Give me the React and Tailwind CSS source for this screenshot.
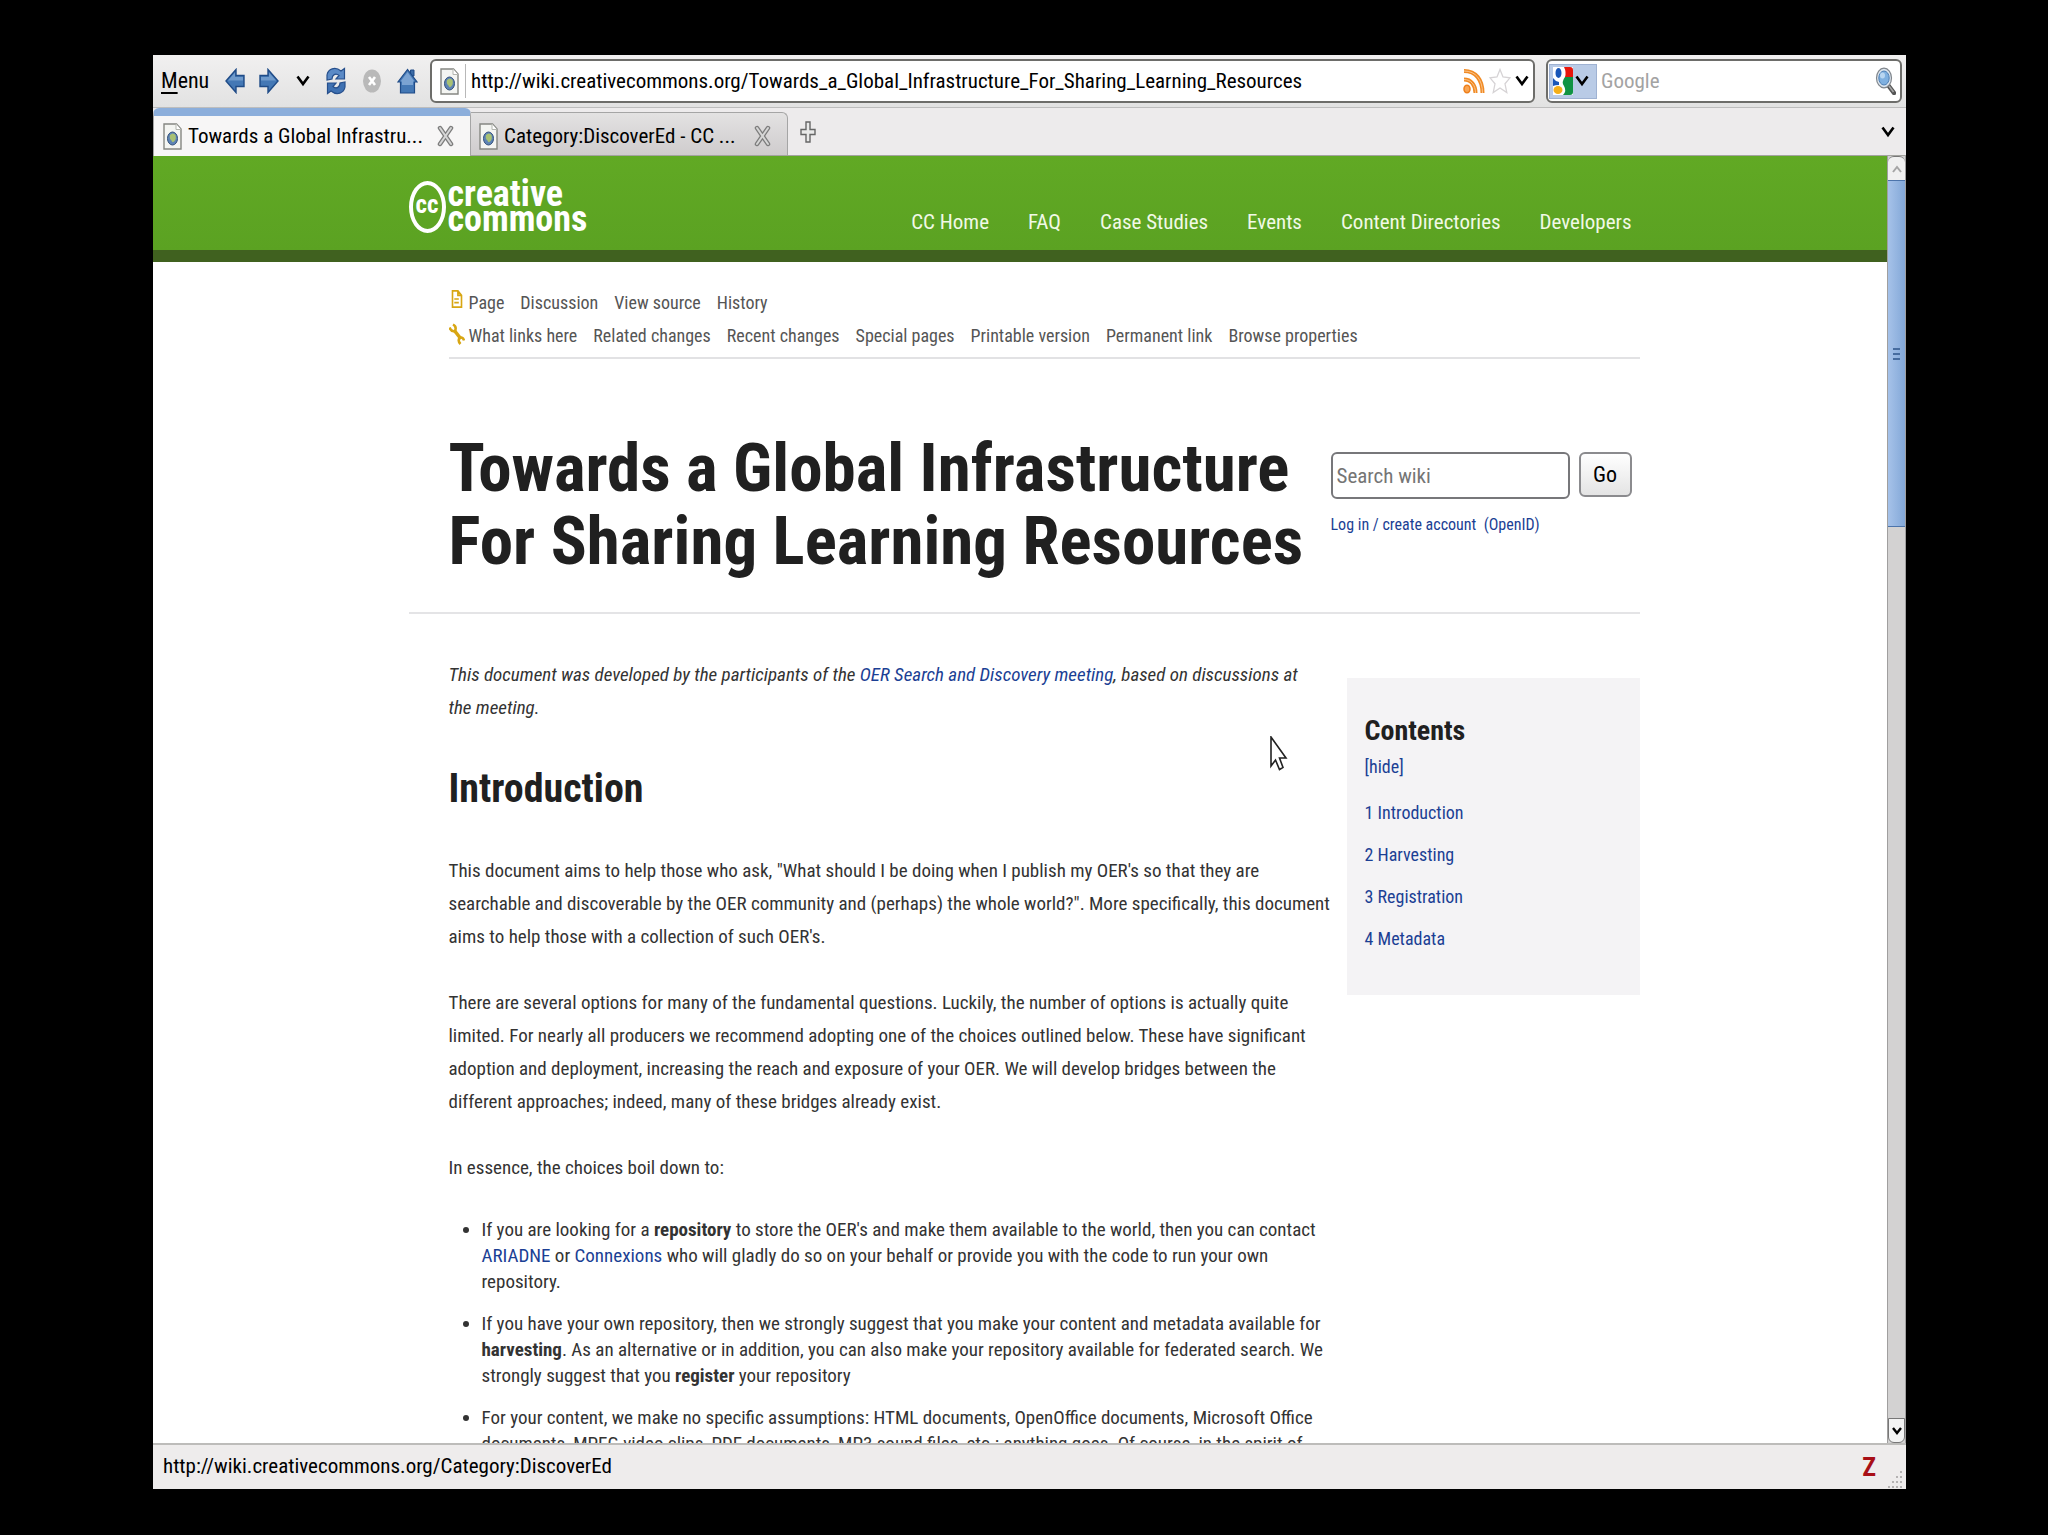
import React from "react";

const navLinks = ["CC Home", "FAQ", "Case Studies", "Events", "Content Directories", "Developers"];
const pageLinks = ["Page", "Discussion", "View source", "History"];
const toolLinks = [
  "What links here",
  "Related changes",
  "Recent changes",
  "Special pages",
  "Printable version",
  "Permanent link",
  "Browse properties",
];
const contents = ["Introduction", "Harvesting", "Registration", "Metadata"];

const Chevron = ({ className = "" }) => (
  <svg viewBox="0 0 14 12" className={`h-3 w-[14px] shrink-0 ${className}`} fill="none" aria-hidden="true">
    <path d="M1.500 1.500 7 9 12.500 1.500" stroke="currentColor" strokeWidth="2.600" />
  </svg>
);

const PageIcon = () => (
  <svg viewBox="0 0 19 27" className="h-[27px] w-[19px] shrink-0" aria-hidden="true">
    <path d="M1 1h12.500l4.500 5v20H1z" fill="#f4f5f2" stroke="#858782" strokeWidth="1.400" />
    <path d="M13 1v5.500h5" fill="#fff" stroke="#b4b6b0" />
    <ellipse cx="9.500" cy="15.500" rx="5" ry="6.500" fill="#5d83b5" stroke="#34517c" />
    <path d="M7 12q3-3 5.500 0q1 4-1 6q-2 2.500-3-.5q-2.500-2-1.500-5.500z" fill="#a8c173" />
  </svg>
);

const ArrowIcon = ({ flip }) => (
  <svg viewBox="0 0 20 26" className={`h-[26px] w-5 ${flip ? "-scale-x-100" : ""}`} aria-hidden="true">
    <path d="M1 13 11 1.500V7.500H19V18.500H11V24.500z" fill="#4478b5" stroke="#1f4b87" strokeWidth="1.400" />
    <path d="M3 12.500 10 4.500V9H18V12.500z" fill="#6f9acb" />
  </svg>
);

const ReloadIcon = () => (
  <svg viewBox="0 0 20 28" className="h-7 w-5" aria-hidden="true">
    <path d="M1 13V8C2 2 9-1 15 4L18.500 1.500V12H10L13 8.500C9.500 5.500 6 8 6 12z" fill="#5b8ac6" stroke="#264f8c" strokeWidth="1.200" />
    <path d="M19 15V20C18 26 11 29 5 24L1.500 26.500V16H10L7 19.500C10.500 22.500 14 20 14 16z" fill="#3f71b2" stroke="#264f8c" strokeWidth="1.200" />
  </svg>
);

const StopIcon = () => (
  <svg viewBox="0 0 18 24" className="h-6 w-[18px]" aria-hidden="true">
    <ellipse cx="9" cy="12" rx="9" ry="11.500" fill="#b9b9b9" />
    <path d="M6 8l6 8M12 8l-6 8" stroke="#fff" strokeWidth="2.600" />
  </svg>
);

const HomeIcon = () => (
  <svg viewBox="0 0 21 26" className="h-[26px] w-[21px]" aria-hidden="true">
    <path d="M13.500 2h3.500v6h-3.500z" fill="#3b6ba6" stroke="#1f4b87" />
    <path d="M10.500 1.500 1 14H3.500V25H17.500V14H20z" fill="#4478b5" stroke="#1f4b87" strokeWidth="1.200" />
    <path d="M10.500 4 3.500 13.500H5V17h11v-3.500h1.500z" fill="#7ba3d2" />
  </svg>
);

const CloseIcon = () => (
  <svg viewBox="0 0 17 22" className="h-[22px] w-[17px]" aria-hidden="true">
    <path d="M3 3l11 16M14 3L3 19" stroke="#7c7c7c" strokeWidth="4.500" strokeLinecap="round" />
    <path d="M3 3l11 16M14 3L3 19" stroke="#d6d6d6" strokeWidth="2" strokeLinecap="round" />
  </svg>
);

const RssIcon = () => (
  <svg viewBox="0 0 22 26" className="h-[26px] w-[22px]" fill="none" aria-hidden="true">
    <path d="M1 3C13 3 19.500 12 19.500 25M1 11.500C8 11.500 12.500 17 12.500 25" stroke="#f08a24" strokeWidth="4" />
    <path d="M1 3C13 3 19.500 12 19.500 25M1 11.500C8 11.500 12.500 17 12.500 25" stroke="#fbc48b" strokeWidth="1" />
    <ellipse cx="4" cy="21" rx="3" ry="3.800" fill="#f9a552" stroke="#ee7f1b" strokeWidth="1.500" />
  </svg>
);

const StarIcon = () => (
  <svg viewBox="0 0 22 26" className="h-[26px] w-[22px]" aria-hidden="true">
    <path d="M11 1.500l3 7.500 7 .8-5 6 1.800 8.700L11 20l-6.800 4.500L6 15.800l-5-6 7-.8z" fill="#fff" stroke="#d6d3d5" strokeWidth="1.300" />
  </svg>
);

const GoogleIcon = () => (
  <svg viewBox="0 0 20 28" className="h-7 w-5" aria-hidden="true">
    <path d="M0 0h20v28H0z" fill="#fff" />
    <path d="M11 0h6q3 0 3 3v7h-8q1.500-5-1-10z" fill="#e8160c" />
    <path d="M12 10h8v15q0 3-3 3h-7q4-4 1-9-3-4 1-9z" fill="#109343" />
    <path d="M0 11q2 3 6 4v3q-4 0-6 1z" fill="#1957b8" />
    <ellipse cx="5.500" cy="6" rx="3" ry="5" fill="#1957b8" />
    <ellipse cx="5" cy="23" rx="4.500" ry="4" fill="#f4af19" />
  </svg>
);

const SearchIcon = () => (
  <svg viewBox="0 0 21 28" className="h-7 w-[21px]" aria-hidden="true">
    <path d="M13 18l6 8" stroke="#555" strokeWidth="4.500" strokeLinecap="round" />
    <path d="M14 19l4.500 6" stroke="#a5a5a5" strokeWidth="1.500" />
    <ellipse cx="9" cy="11" rx="7.500" ry="9.800" fill="#dde6ef" stroke="#80868c" strokeWidth="1.200" />
    <ellipse cx="9" cy="11" rx="5.200" ry="7" fill="#7fb0e0" stroke="#4d7eb3" />
    <ellipse cx="7.500" cy="8.500" rx="2.500" ry="3" fill="#b9d6f1" />
  </svg>
);

const A = ({ children }) => (
  <a href="#" className="text-[#1b3f94]">
    {children}
  </a>
);

const Toolbar = () => (
  <div className="flex h-[53px] shrink-0 items-center border-b border-[#bdbdbd] bg-linear-to-b from-[#f1f0f0] to-[#e2e2e2] pr-1 pl-2">
    <button className="w-[64px] text-left text-[22px] leading-7">
      <span className="underline underline-offset-4">M</span>enu
    </button>
    <button aria-label="Back" className="mr-[14px]">
      <ArrowIcon />
    </button>
    <button aria-label="Forward" className="mr-[17px]">
      <ArrowIcon flip />
    </button>
    <button aria-label="History" className="mr-4">
      <Chevron />
    </button>
    <button aria-label="Reload" className="mr-[17px]">
      <ReloadIcon />
    </button>
    <button aria-label="Stop" className="mr-4">
      <StopIcon />
    </button>
    <button aria-label="Home" className="mr-3">
      <HomeIcon />
    </button>
    <div className="flex h-11 min-w-0 flex-1 items-center rounded-md border-2 border-[#6d6d6a] bg-white pr-1 pl-2">
      <PageIcon />
      <span className="mr-[5px] ml-[6px] h-[34px] w-px bg-[#b8b8b8]" />
      <input
        aria-label="Location"
        className="min-w-0 flex-1 text-[21px] leading-7 outline-none"
        defaultValue="http://wiki.creativecommons.org/Towards_a_Global_Infrastructure_For_Sharing_Learning_Resources"
      />
      <button aria-label="Subscribe" className="mr-1">
        <RssIcon />
      </button>
      <button aria-label="Bookmark" className="mr-1">
        <StarIcon />
      </button>
      <button aria-label="Show history">
        <Chevron />
      </button>
    </div>
    <div className="ml-[11px] flex h-11 w-[356px] items-center rounded-md border-2 border-[#6d6d6a] bg-white pr-1 pl-px">
      <button
        aria-label="Search engine"
        className="flex h-[35px] w-12 shrink-0 items-center justify-between border border-[#9fb2d2] bg-[#b9cbe6] pr-[7px] pl-[3px]"
      >
        <GoogleIcon />
        <Chevron />
      </button>
      <input
        aria-label="Google search"
        placeholder="Google"
        className="min-w-0 flex-1 pl-1 text-[21px] leading-7 outline-none placeholder:text-[#a3a3a3]"
      />
      <button aria-label="Search">
        <SearchIcon />
      </button>
    </div>
  </div>
);

const TabBar = () => (
  <div className="flex h-12 shrink-0 items-stretch border-b border-[#a3a39f] bg-[#edebec] text-[21px] leading-7">
    <div className="-mb-px flex w-[318px] items-center rounded-t-md border-x border-t-8 border-x-[#a5a5a5] border-t-[#8caedb] bg-[#f7f6f6] pr-[16px] pl-[9px]">
      <PageIcon />
      <span className="ml-[6px] flex-1 whitespace-nowrap">Towards a Global Infrastru...</span>
      <button aria-label="Close tab">
        <CloseIcon />
      </button>
    </div>
    <div className="mt-1 flex w-[317px] items-center rounded-tr-md border-t border-r border-[#a5a5a5] bg-linear-to-b from-[#e3e2e2] to-[#cfcccd] pt-1 pr-[16px] pl-2">
      <PageIcon />
      <span className="ml-[6px] flex-1 whitespace-nowrap">Category:DiscoverEd - CC ...</span>
      <button aria-label="Close tab">
        <CloseIcon />
      </button>
    </div>
    <button aria-label="New tab" className="ml-3">
      <svg viewBox="0 0 16 22" className="h-[22px] w-4" aria-hidden="true">
        <path d="M6 1h4v7.500h5v5h-5V21H6v-7.500H1v-5h5z" fill="#e9e9e9" stroke="#666" strokeWidth="1.400" />
      </svg>
    </button>
    <button aria-label="List all tabs" className="mr-[11px] ml-auto">
      <Chevron />
    </button>
  </div>
);

const Scrollbar = () => (
  <div className="flex w-[19px] shrink-0 flex-col border-x border-[#a09f9f] bg-[#d3d2d2]">
    <button
      aria-label="Scroll up"
      className="flex h-6 items-center justify-center rounded-t-md border-t border-[#777] bg-[#f0f0f0] text-[#a5a5a5]"
    >
      <svg viewBox="0 0 10 8" className="h-2 w-[10px]" fill="none" aria-hidden="true">
        <path d="M1 7l4-5 4 5" stroke="currentColor" strokeWidth="2" />
      </svg>
    </button>
    <div className="flex h-[347px] flex-col items-center justify-center gap-[3px] border-y border-[#4c74ab] bg-linear-to-r from-[#a6c2e9] to-[#83a8d8]">
      <span className="h-[2px] w-[7px] bg-[#476c9f]" />
      <span className="h-[2px] w-[7px] bg-[#476c9f]" />
      <span className="h-[2px] w-[7px] bg-[#476c9f]" />
    </div>
    <button
      aria-label="Scroll down"
      className="mt-auto flex h-[25px] items-center justify-center rounded-b-md border border-[#777] bg-[#f3f3f3]"
    >
      <svg viewBox="0 0 10 8" className="h-2 w-[10px]" fill="none" aria-hidden="true">
        <path d="M1 1l4 5 4-5" stroke="currentColor" strokeWidth="2.400" />
      </svg>
    </button>
  </div>
);

const SiteHeader = () => (
  <header className="h-[106px] border-b-12 border-[#40611f] bg-linear-to-b from-[#61a924] to-[#5ba222] pl-2">
    <div className="mx-auto flex max-w-[1231px] items-end justify-between pr-2">
      <a href="#" className="flex h-[82px] items-end text-white">
        <span className="mb-[5px] flex h-[52px] w-[37px] items-center justify-center rounded-[50%] border-4 border-white pb-1 text-[25px] leading-6 font-bold">
          cc
        </span>
        <span className="mb-[6px] ml-[2px] text-[36px] leading-[25px] font-bold">
          creative
          <br />
          commons
        </span>
      </a>
      <nav className="mb-[2px] flex gap-[39px] text-[21px] leading-7 text-[#f1f9e6]">
        {navLinks.map((label) => (
          <a key={label} href="#">
            {label}
          </a>
        ))}
      </nav>
    </div>
  </header>
);

const ActionLinks = () => (
  <div className="ml-10 border-b-2 border-[#e2e2e4] pt-6 pb-[5px] text-[18px] leading-[33px] text-[#555]">
    <div className="flex gap-4">
      <svg viewBox="0 0 16 20" className="-mr-3 mt-1 h-[18px] w-4" fill="none" aria-hidden="true">
        <path d="M3 1h6l4 5v13H3zM9 1v5h4M5 10h5M5 14h5" stroke="#d8a613" strokeWidth="1.800" />
      </svg>
      {pageLinks.map((label) => (
        <a key={label} href="#">
          {label}
        </a>
      ))}
    </div>
    <div className="flex gap-4">
      <svg viewBox="0 0 16 22" className="-mr-3 mt-1 h-[22px] w-4" fill="none" aria-hidden="true">
        <path d="M5 7l7 9" stroke="#d8a613" strokeWidth="3.500" />
        <path d="M4 1.500q4 2 2 6.500-4 1-5.500-3.500M15 17.500q-1-4-4.500-2.500-2 3 1 6" stroke="#d8a613" strokeWidth="2.500" />
      </svg>
      {toolLinks.map((label) => (
        <a key={label} href="#">
          {label}
        </a>
      ))}
    </div>
  </div>
);

const TitleBlock = () => (
  <div className="flex justify-between border-b-2 border-[#e4e4e6] pt-[73px] pb-[34px] pl-10">
    <h1 className="text-[67px] leading-[73px] font-bold whitespace-nowrap text-[#202020]">
      Towards a Global Infrastructure
      <br />
      For Sharing Learning Resources
    </h1>
    <div className="w-[309px] shrink-0 pt-5">
      <form className="flex gap-[9px]" onSubmit={(e) => e.preventDefault()}>
        <input
          aria-label="Search wiki"
          placeholder="Search wiki"
          className="h-[47px] w-[239px] rounded-md border-2 border-[#77777a] px-1 text-[21px] placeholder:text-[#757575]"
        />
        <button className="h-[45px] w-[53px] rounded-md border-2 border-[#8b8b8e] bg-linear-to-b from-white to-[#e4e4e4] text-[22px] leading-7">
          Go
        </button>
      </form>
      <p className="mt-[14px] text-[16px] leading-6 text-[#1b3f94]">
        <a href="#">Log in / create account</a>&nbsp; <a href="#">(OpenID)</a>
      </p>
    </div>
  </div>
);

const Contents = () => (
  <aside className="mt-5 h-[317px] w-[293px] shrink-0 bg-[#f4f3f5] px-[18px] pt-[35px] text-[18px] text-[#1b3f94]">
    <h2 className="text-[28px] leading-9 font-bold text-[#202020]">Contents</h2>
    <p className="mb-4 leading-9">
      [<a href="#">hide</a>]
    </p>
    <ol className="flex flex-col gap-[18px] leading-6">
      {contents.map((label, i) => (
        <li key={label}>
          <a href="#">
            {i + 1} {label}
          </a>
        </li>
      ))}
    </ol>
  </aside>
);

const Article = () => (
  <article className="min-w-0 flex-1 text-[19px] leading-[33px] whitespace-nowrap text-[#333]">
    <p className="italic">
      This document was developed by the participants of the <A>OER Search and Discovery meeting</A>, based on discussions at
      <br />
      the meeting.
    </p>
    <h2 className="my-[38px] text-[40px] leading-[54px] font-bold text-[#202020]">Introduction</h2>
    <p className="mb-[33px]">
      This document aims to help those who ask, "What should I be doing when I publish my OER's so that they are
      <br />
      searchable and discoverable by the OER community and (perhaps) the whole world?". More specifically, this document
      <br />
      aims to help those with a collection of such OER's.
    </p>
    <p className="mb-[33px]">
      There are several options for many of the fundamental questions. Luckily, the number of options is actually quite
      <br />
      limited. For nearly all producers we recommend adopting one of the choices outlined below. These have significant
      <br />
      adoption and deployment, increasing the reach and exposure of your OER. We will develop bridges between the
      <br />
      different approaches; indeed, many of these bridges already exist.
    </p>
    <p className="mb-[33px]">In essence, the choices boil down to:</p>
    <ul className="list-disc space-y-4 pl-[33px] leading-[26px]">
      <li>
        If you are looking for a <b>repository</b> to store the OER's and make them available to the world, then you can contact
        <br />
        <A>ARIADNE</A> or <A>Connexions</A> who will gladly do so on your behalf or provide you with the code to run your own
        <br />
        repository.
      </li>
      <li>
        If you have your own repository, then we strongly suggest that you make your content and metadata available for
        <br />
        <b>harvesting</b>. As an alternative or in addition, you can also make your repository available for federated search. We
        <br />
        strongly suggest that you <b>register</b> your repository
      </li>
      <li>
        For your content, we make no specific assumptions: HTML documents, OpenOffice documents, Microsoft Office
        <br />
        documents, MPEG video clips, PDF documents, MP3 sound files, etc.: anything goes. Of course, in the spirit of
      </li>
    </ul>
  </article>
);

const StatusBar = () => (
  <footer className="flex h-[46px] shrink-0 items-center border-t-2 border-[#bdbcba] bg-[#eeecec] pr-1 pl-[10px] text-[21px] leading-7">
    <span className="flex-1 pb-[2px]">http://wiki.creativecommons.org/Category:DiscoverEd</span>
    <span className="mr-3 text-[26px] font-bold text-[#a80f16]">Z</span>
    <svg viewBox="0 0 14 18" className="h-[18px] w-[14px] self-end" fill="#b5b3b3" aria-hidden="true">
      <path d="M12 0h2v2h-2zM8 5h2v2H8zM12 5h2v2h-2zM4 10h2v2H4zM8 10h2v2H8zM12 10h2v2h-2zM0 15h2v2H0zM4 15h2v2H4zM8 15h2v2H8zM12 15h2v2h-2z" />
    </svg>
  </footer>
);

export default function App() {
  return (
    <div className="h-screen bg-black pt-[55px] pr-[142px] pb-[46px] pl-[153px] font-['Roboto_Condensed','Liberation_Sans',sans-serif] text-black">
      <div className="flex h-full flex-col overflow-hidden bg-white">
        <Toolbar />
        <TabBar />
        <div className="flex min-h-0 flex-1">
          <main className="min-w-0 flex-1 overflow-hidden">
            <SiteHeader />
            <div className="pl-2">
              <div className="relative mx-auto max-w-[1231px]">
                <ActionLinks />
                <TitleBlock />
                <div className="flex pt-11 pl-10">
                  <Article />
                  <Contents />
                </div>
                <svg
                  viewBox="0 0 18 36"
                  className="absolute top-[474px] left-[861px] h-9 w-[18px]"
                  aria-hidden="true"
                >
                  <path d="M1 1v29l4.500-6 4 9.500 3.500-2-3.500-9.500H16z" fill="#fff" stroke="#222" strokeWidth="1.600" />
                </svg>
              </div>
            </div>
          </main>
          <Scrollbar />
        </div>
        <StatusBar />
      </div>
    </div>
  );
}
